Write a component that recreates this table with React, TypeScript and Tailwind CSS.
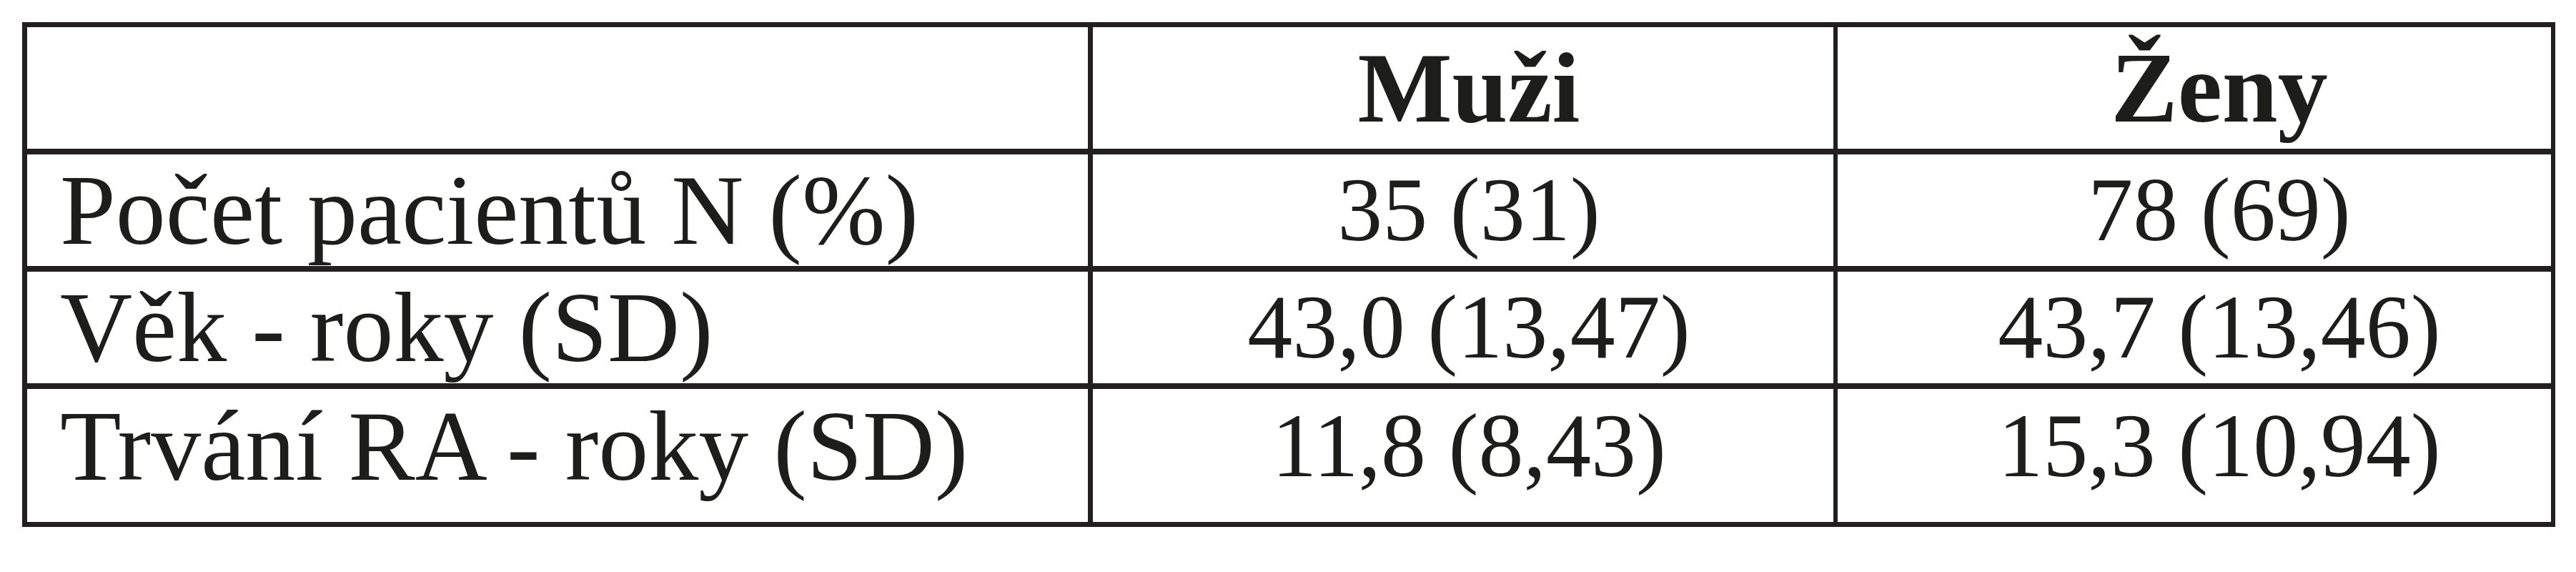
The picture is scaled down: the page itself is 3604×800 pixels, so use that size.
const rows = [
  { label: "Počet pacientů N (%)", muzi: "35 (31)", zeny: "78 (69)", h: "h-[164px]", pad: "" },
  { label: "Věk - roky (SD)", muzi: "43,0 (13,47)", zeny: "43,7 (13,46)", h: "h-[164px]", pad: "" },
  { label: "Trvání RA - roky (SD)", muzi: "11,8 (8,43)", zeny: "15,3 (10,94)", h: "h-[194px]", pad: "pb-[26px]" },
];

export default function App() {
  return (
    <div className="w-[3604px] h-[800px] bg-white pt-[31px] pl-[31px] font-['Liberation_Serif',serif] text-[#1d1d1b]">
      <div className="w-[3544px] border-y-[7px] border-l-[7px] border-r-[6px] border-[#231f20]">
        {/* header */}
        <div className="flex h-[170px]">
          <div className="w-[1484px]" />
          <div className="w-[1043px] border-l-[7px] border-[#231f20] flex items-center justify-center pl-[16px] text-[140px] leading-none font-bold">
            Muži
          </div>
          <div className="w-[1004px] border-l-[6px] border-[#231f20] flex items-center justify-center pl-[70px] text-[140px] leading-none font-bold">
            Ženy
          </div>
        </div>

        {rows.map((r) => (
          <div key={r.label} className={`flex border-t-[8px] border-[#231f20] ${r.h}`}>
            <div className={`w-[1484px] flex items-center pl-[46px] text-[140px] leading-none whitespace-nowrap ${r.pad}`}>
              {r.label}
            </div>
            <div className={`w-[1043px] border-l-[7px] border-[#231f20] flex items-center justify-center pl-[16px] text-[126px] leading-none whitespace-nowrap ${r.pad}`}>
              {r.muzi}
            </div>
            <div className={`w-[1004px] border-l-[6px] border-[#231f20] flex items-center justify-center pl-[70px] text-[126px] leading-none whitespace-nowrap ${r.pad}`}>
              {r.zeny}
            </div>
          </div>
        ))}
      </div>
    </div>
  );
}
